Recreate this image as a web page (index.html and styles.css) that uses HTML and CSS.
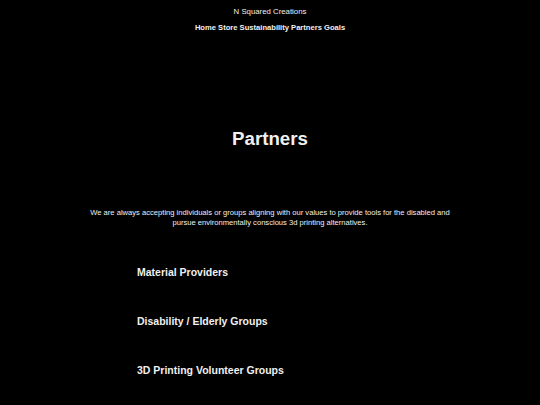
FILE: index.html
```html
<!DOCTYPE html>
<html>
<head>
<meta charset="utf-8">
<link rel="stylesheet" href="styles.css">
</head>
<body>
<header class="site-header">
  <div class="brand">N Squared Creations</div>
  <nav class="nav">Home Store Sustainability Partners Goals</nav>
</header>
<main>
  <h1 class="title">Partners</h1>
  <p class="intro">We are always accepting individuals or groups aligning with our values to provide tools for the disabled and pursue environmentally conscious 3d printing alternatives.</p>
  <section class="groups">
    <h3 class="group">Material Providers</h3>
    <h3 class="group">Disability / Elderly Groups</h3>
    <h3 class="group">3D Printing Volunteer Groups</h3>
  </section>
</main>
</body>
</html>
```
FILE: styles.css
```css
html, body {
  margin: 0;
  padding: 0;
  background: #000;
  color: #f0f0f0;
  font-family: "Liberation Sans", Arial, sans-serif;
}
.site-header {
  text-align: center;
  padding-top: 7px;
}
.brand {
  font-size: 7.8px;
  line-height: 10px;
}
.nav {
  font-size: 7.6px;
  font-weight: bold;
  line-height: 10px;
  margin-top: 6px;
}
.title {
  text-align: center;
  font-size: 18.7px;
  font-weight: bold;
  margin: 0;
  padding-top: 95px;
  line-height: 22px;
}
.intro {
  text-align: center;
  font-size: 7.6px;
  line-height: 9.5px;
  width: 370px;
  margin: 58px auto 0;
}
.groups {
  padding-left: 137px;
  padding-top: 39px;
}
.group {
  font-size: 10.5px;
  font-weight: bold;
  margin: 0 0 37px;
  line-height: 12px;
}
```
